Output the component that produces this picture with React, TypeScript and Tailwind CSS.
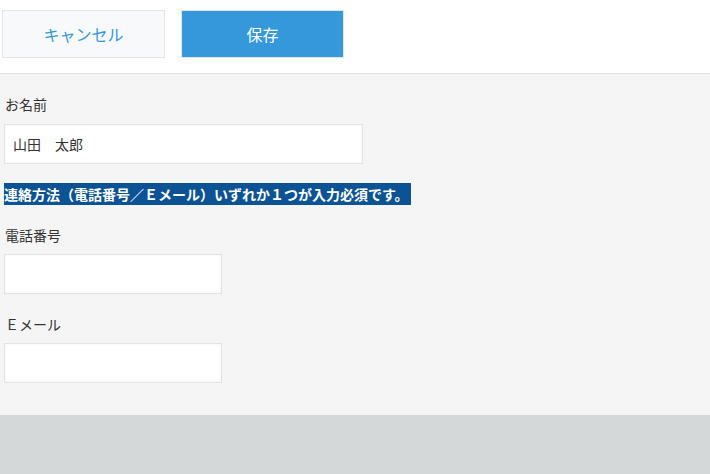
export default function App() {
  const font = { fontFamily: '"Noto Sans CJK JP", "Noto Sans", sans-serif' };
  return (
    <div className="min-h-[474px] w-[710px] bg-[#d4d8d8]" style={font}>
      <div className="flex h-[74px] items-start gap-[16px] border-b border-[#e3e3e3] bg-white pl-[2px] pt-[10px]">
        <button className="h-[48px] w-[163px] border border-[#e3e7ea] bg-[#f7f9fa] text-[16px] text-[#3498db]">
          キャンセル
        </button>
        <button className="h-[48px] w-[163px] border border-[#e3e7ea] bg-[#3498db] text-[16px] text-white">
          保存
        </button>
      </div>

      <div className="bg-[#f5f5f5] px-[4px] pb-[32px] pt-[20px] text-[14px] text-[#333]">
        <div className="h-[20px] pl-[1px] leading-[20px]">お名前</div>
        <div className="mt-[10px] flex h-[40px] w-[359px] items-center border border-[#e3e3e3] bg-white pl-[8px] shadow-[inset_0_0_3px_rgba(0,0,0,0.06)]">
          山田　太郎
        </div>

        <div className="mt-[19px] inline-block h-[22px] bg-[#0b5394] pr-[2px] text-[14px] font-bold leading-[22px] text-white">
          連絡方法（電話番号／Ｅメール）いずれか１つが入力必須です。
        </div>

        <div className="mt-[20px] h-[20px] pl-[1px] leading-[20px]">電話番号</div>
        <div className="mt-[9px] h-[40px] w-[218px] border border-[#e3e3e3] bg-white shadow-[inset_0_0_3px_rgba(0,0,0,0.06)]" />

        <div className="mt-[20px] h-[20px] pl-[1px] leading-[20px]">Ｅメール</div>
        <div className="mt-[9px] h-[40px] w-[218px] border border-[#e3e3e3] bg-white shadow-[inset_0_0_3px_rgba(0,0,0,0.06)]" />
      </div>
    </div>
  );
}
